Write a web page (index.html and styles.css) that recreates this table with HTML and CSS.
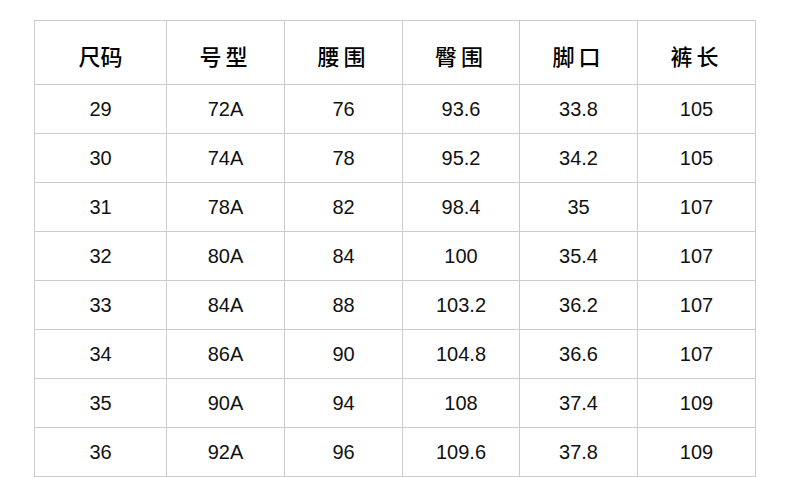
FILE: index.html
```html
<!DOCTYPE html>
<html lang="zh-CN">
<head>
<meta charset="utf-8">
<title>尺码表</title>
<link rel="stylesheet" href="styles.css">
</head>
<body>
<table class="size-table">
  <colgroup>
    <col class="c-first">
    <col class="c-mid">
    <col class="c-mid">
    <col class="c-narrow">
    <col class="c-mid">
    <col class="c-mid">
  </colgroup>
  <thead>
    <tr>
      <th>尺码</th>
      <th class="sp">号型</th>
      <th class="sp">腰围</th>
      <th class="sp">臀围</th>
      <th class="sp">脚口</th>
      <th class="sp">裤长</th>
    </tr>
  </thead>
  <tbody>
    <tr><td>29</td><td>72A</td><td>76</td><td>93.6</td><td>33.8</td><td>105</td></tr>
    <tr><td>30</td><td>74A</td><td>78</td><td>95.2</td><td>34.2</td><td>105</td></tr>
    <tr><td>31</td><td>78A</td><td>82</td><td>98.4</td><td>35</td><td>107</td></tr>
    <tr><td>32</td><td>80A</td><td>84</td><td>100</td><td>35.4</td><td>107</td></tr>
    <tr><td>33</td><td>84A</td><td>88</td><td>103.2</td><td>36.2</td><td>107</td></tr>
    <tr><td>34</td><td>86A</td><td>90</td><td>104.8</td><td>36.6</td><td>107</td></tr>
    <tr><td>35</td><td>90A</td><td>94</td><td>108</td><td>37.4</td><td>109</td></tr>
    <tr><td>36</td><td>92A</td><td>96</td><td>109.6</td><td>37.8</td><td>109</td></tr>
  </tbody>
</table>
</body>
</html>
```
FILE: styles.css
```css
html, body {
  margin: 0;
  padding: 0;
  background: #ffffff;
}

body {
  padding: 20px 0 0 34px;
}

.size-table {
  table-layout: fixed;
  border-collapse: separate;
  border-spacing: 1px;
  background: #cccccc;
  width: 722px;
  font-family: "Liberation Sans", "Noto Sans CJK SC", sans-serif;
  color: #111111;
}

.c-first { width: 131px; }
.c-mid { width: 117px; }
.c-narrow { width: 116px; }

.size-table th,
.size-table td {
  background: #ffffff;
  padding: 0;
  text-align: center;
  vertical-align: middle;
}

.size-table th {
  height: 63px;
  font-family: "Noto Sans CJK SC", sans-serif;
  font-size: 22px;
  font-weight: 500;
  color: #000000;
  padding-top: 4px;
  box-sizing: border-box;
}

.size-table th.sp {
  letter-spacing: 4px;
}

.size-table td {
  height: 48px;
  font-size: 20px;
}
```
